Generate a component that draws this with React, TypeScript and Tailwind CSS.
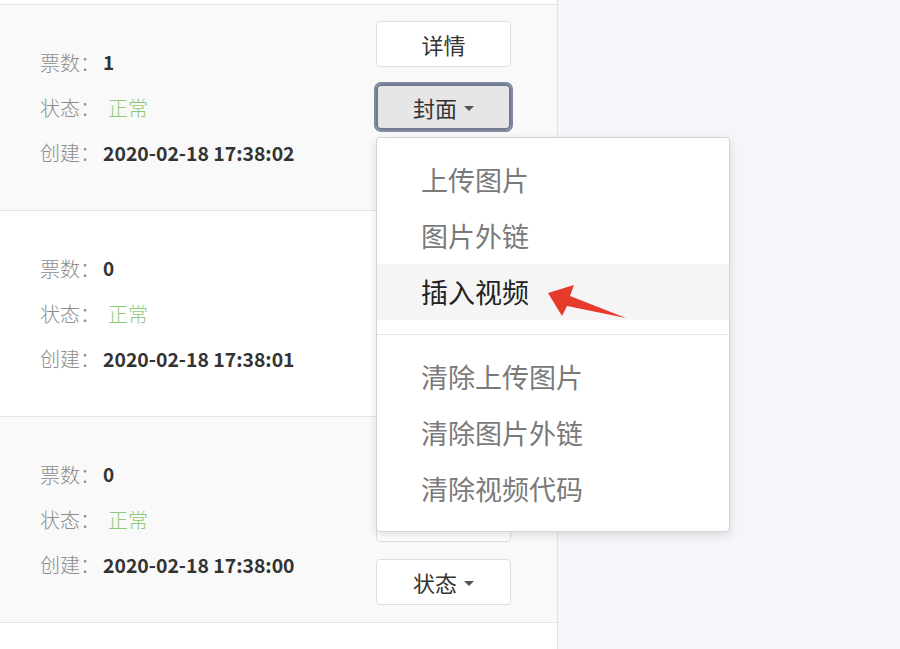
import React from 'react';

type Row = { votes: string; created: string; bg: string };

const rows: Row[] = [
  { votes: '1', created: '2020-02-18 17:38:02', bg: 'bg-[#f9f9f9]' },
  { votes: '0', created: '2020-02-18 17:38:01', bg: 'bg-white' },
  { votes: '0', created: '2020-02-18 17:38:00', bg: 'bg-[#f9f9f9]' },
];

const menuTop = ['上传图片', '图片外链', '插入视频'];
const menuBottom = ['清除上传图片', '清除图片外链', '清除视频代码'];

const Caret = () => (
  <span className="inline-block w-0 h-0 border-x-[5px] border-x-transparent border-t-[5px] border-t-[#555] ml-[7px] mt-[2px]" />
);

const Button: React.FC<{ label: string; caret?: boolean; active?: boolean }> = ({ label, caret, active }) => (
  <button
    className={
      active
        ? 'h-[46px] w-[135px] rounded-[5px] border-2 border-[#6f7a8f] outline-2 outline-[#7f8aa0] bg-[#e6e6e6] text-[22px] text-[#333] flex items-center justify-center'
        : 'h-[46px] w-[135px] rounded-[4px] border border-[#dedede] bg-white text-[22px] text-[#333] flex items-center justify-center'
    }
  >
    {label}
    {caret && <Caret />}
  </button>
);

// The open "封面" menu of the first row
const CoverMenu = () => (
  <div className="absolute left-0 top-[53px] z-10 w-[354px] rounded-[4px] border border-[#d4d4d4] bg-white py-[14px] shadow-[0_3px_10px_rgba(0,0,0,0.12)]">
    {menuTop.map((item, i) => (
      <div
        key={item}
        className={
          i === 2
            ? 'h-[56px] flex items-center pl-[44px] text-[27px] text-[#222] bg-[#f5f5f5]'
            : 'h-[56px] flex items-center pl-[44px] text-[27px] text-[#7a7a7a]'
        }
      >
        {item}
      </div>
    ))}
    <div className="my-[14px] h-px bg-[#e5e5e5]" />
    {menuBottom.map((item) => (
      <div key={item} className="h-[56px] flex items-center pl-[44px] text-[27px] text-[#7a7a7a]">
        {item}
      </div>
    ))}
  </div>
);

export default function App() {
  return (
    <div className="relative w-[900px] h-[649px] overflow-hidden bg-[#f5f6fa] flex font-['Noto_Sans_CJK_SC','Noto_Sans',sans-serif]">
      <div className="w-[558px] shrink-0 border-r border-[#e2e2e2] bg-white flex flex-col">
        <div className="h-[4px] shrink-0 bg-white" />
        {rows.map((row, idx) => (
          <div key={idx} className={`h-[206px] shrink-0 border-t border-[#e6e6e6] flex ${row.bg}`}>
            <div className="flex-1 pl-[40px] flex flex-col justify-center text-[20px]">
              <div className="h-[45px] flex items-center">
                <span className="font-light text-[#8c8c8c]">票数：</span>
                <span className="ml-[3px] text-[19px] font-bold text-[#333]">{row.votes}</span>
              </div>
              <div className="h-[45px] flex items-center">
                <span className="font-light text-[#8c8c8c]">状态：</span>
                <span className="ml-[8px] font-light text-[#8fc872]">正常</span>
              </div>
              <div className="h-[45px] flex items-center">
                <span className="font-light text-[#8c8c8c]">创建：</span>
                <span className="ml-[3px] text-[19.4px] font-bold text-[#333]">{row.created}</span>
              </div>
            </div>
            <div className="w-[135px] mr-[46px] pt-[16px] flex flex-col gap-[17px]">
              <Button label="详情" />
              <div className="relative">
                <Button label="封面" caret active={idx === 0} />
                {idx === 0 && <CoverMenu />}
              </div>
              <Button label="状态" caret />
            </div>
          </div>
        ))}
        <div className="flex-1 border-t border-[#e6e6e6] bg-white" />
      </div>

      {/* annotation arrow */}
      <svg className="absolute left-[540px] top-[280px] z-20" width="90" height="42" viewBox="0 0 90 42">
        <polygon points="8,13 34,5 30,16 86,38 27,26 22,36" fill="#e63a2b" />
      </svg>
    </div>
  );
}
